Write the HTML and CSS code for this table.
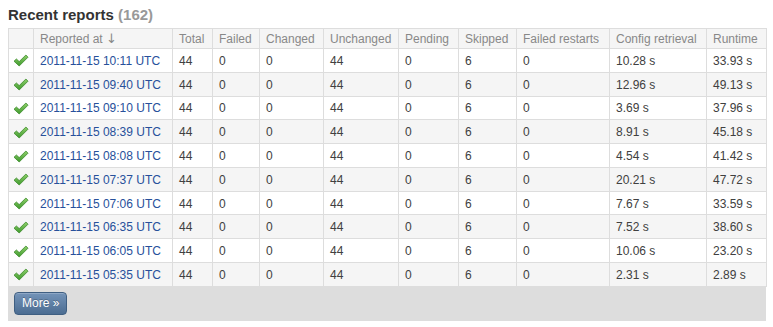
FILE: index.html
```html
<!DOCTYPE html>
<html>
<head>
<meta charset="utf-8">
<link rel="stylesheet" href="styles.css">
</head>
<body>
<div class="panel">
  <h2 class="title">Recent reports <span class="count">(162)</span></h2>
  <table class="reports">
    <colgroup>
      <col class="c-st"><col class="c-at"><col class="c-total"><col class="c-failed"><col class="c-changed"><col class="c-unch"><col class="c-pend"><col class="c-skip"><col class="c-fr"><col class="c-cfg"><col class="c-run">
    </colgroup>
    <thead>
      <tr><th></th><th>Reported at <span class="arrow">↓</span></th><th>Total</th><th>Failed</th><th>Changed</th><th>Unchanged</th><th>Pending</th><th>Skipped</th><th>Failed restarts</th><th>Config retrieval</th><th>Runtime</th></tr>
    </thead>
    <tbody id="rows"></tbody>
  </table>
  <div class="foot"><a class="btn" href="#">More »</a></div>
</div>
<script src="app.js"></script>
</body>
</html>
```
FILE: app.js
```js
var data = [
  ["10:11","10.28 s","33.93 s"],
  ["09:40","12.96 s","49.13 s"],
  ["09:10","3.69 s","37.96 s"],
  ["08:39","8.91 s","45.18 s"],
  ["08:08","4.54 s","41.42 s"],
  ["07:37","20.21 s","47.72 s"],
  ["07:06","7.67 s","33.59 s"],
  ["06:35","7.52 s","38.60 s"],
  ["06:05","10.06 s","23.20 s"],
  ["05:35","2.31 s","2.89 s"]
];
var check = '<svg class="ok" width="16" height="13" viewBox="0 0 16 13"><defs><linearGradient id="g" x1="0" y1="0" x2="0" y2="1"><stop offset="0" stop-color="#8fd06a"/><stop offset="1" stop-color="#3f9a2e"/></linearGradient></defs><path d="M1 7.2 L3.4 5 L6.2 7.6 L12.9 1 L15 3.2 L6.2 12 Z" fill="url(#g)" stroke="#3b8a2b" stroke-width="0.8" stroke-linejoin="round"/></svg>';
var html = "";
data.forEach(function (r) {
  html += '<tr><td class="st">' + check + '</td><td><a href="#">2011-11-15 ' + r[0] + ' UTC</a></td><td>44</td><td>0</td><td>0</td><td>44</td><td>0</td><td>6</td><td>0</td><td>' + r[1] + '</td><td>' + r[2] + '</td></tr>';
});
document.getElementById("rows").innerHTML = html;
```
FILE: styles.css
```css
body {
  margin: 0;
  font-family: "Liberation Sans", Arial, sans-serif;
  font-size: 12px;
  color: #404040;
  background: #fff;
}
.panel {
  width: 758px;
  padding: 0 8px;
}
.title {
  margin: 5px 0 3px;
  font-size: 15px;
  line-height: 20px;
  font-weight: bold;
  color: #333;
}
.count { color: #999; }
.reports {
  width: 758px;
  border-collapse: collapse;
  table-layout: fixed;
}
.c-st { width: 25px; }
.c-at { width: 139px; }
.c-total { width: 40px; }
.c-failed { width: 47px; }
.c-changed { width: 64px; }
.c-unch { width: 75px; }
.c-pend { width: 60px; }
.c-skip { width: 58px; }
.c-fr { width: 93px; }
.c-cfg { width: 97px; }
.c-run { width: 60px; }
.reports th, .reports td {
  border: 1px solid #ddd;
  text-align: left;
  white-space: nowrap;
  padding: 0 6px;
}
.reports th {
  font-weight: normal;
  color: #888;
  background: #f5f5f5;
  line-height: 18px;
  padding-top: 0.5px;
  padding-bottom: 0.5px;
}
.arrow {
  font-family: "DejaVu Sans", sans-serif;
  font-size: 13px;
  line-height: 12px;
}
.reports td {
  line-height: 18px;
  padding-top: 2.9px;
  padding-bottom: 1.9px;
}
.reports tbody tr:nth-child(even) td { background: #f5f5f5; }
.reports td.st { padding: 0 0 0 4px; }
.ok { display: block; margin-top: 1px; }
.reports a { color: #27509b; text-decoration: none; }
.foot {
  background: #ddd;
  height: 34px;
  padding: 5px 0 0 6px;
  box-sizing: border-box;
}
.btn {
  display: inline-block;
  height: 23px;
  line-height: 21px;
  padding: 0 7px;
  box-sizing: border-box;
  border: 1px solid #3f5f82;
  border-radius: 4px;
  background: linear-gradient(#7393b8, #4c6d92);
  color: #fff;
  font-size: 12px;
  text-decoration: none;
  text-shadow: 0 -1px 0 rgba(0,0,0,0.25);
  box-shadow: inset 0 1px 0 rgba(255,255,255,0.2);
}
```
